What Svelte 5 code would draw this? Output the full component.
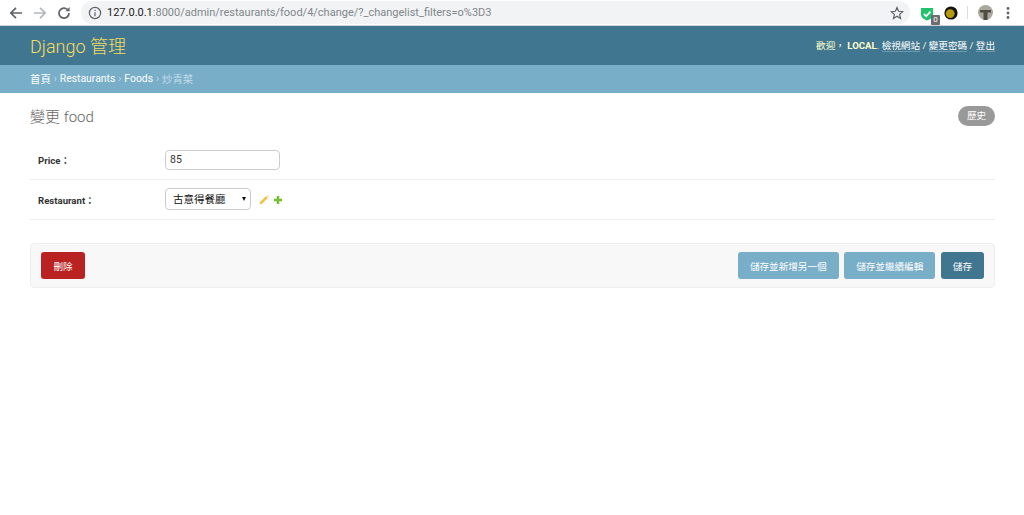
<script>
	let price = $state("85");
	let restaurant = $state("古意得餐廳");
</script>

<div class="browser-bar">
	<div class="nav-icons">
		<svg width="16" height="16" viewBox="0 0 16 16" fill="none" stroke="#5f6368" stroke-width="1.7"><path d="M14 8H3M8 2.8 2.8 8 8 13.2" /></svg>
		<svg width="16" height="16" viewBox="0 0 16 16" fill="none" stroke="#b5b8bb" stroke-width="1.7"><path d="M2 8h11M8 2.8 13.2 8 8 13.2" /></svg>
		<svg width="16" height="16" viewBox="0 0 16 16" fill="none" stroke="#5f6368" stroke-width="1.7"><path d="M13 8a5 5 0 1 1-1.5-3.5" /><path d="M13.6 2v4.2H9.4" fill="#5f6368" stroke="none" /></svg>
	</div>
	<div class="omnibox">
		<svg class="info" width="14" height="14" viewBox="0 0 14 14" fill="none" stroke="#5f6368" stroke-width="1.2"><circle cx="7" cy="7" r="5.6" /><path d="M7 6.2v4M7 3.8v1.3" /></svg>
		<span class="url"><span class="host">127.0.0.1</span>:8000/admin/restaurants/food/4/change/?_changelist_filters=o%3D3</span>
		<svg class="star" width="14" height="14" viewBox="0 0 14 14" fill="none" stroke="#5f6368" stroke-width="1.2"><path d="M7 1.6 8.6 5.3l4 .4-3 2.7.9 4L7 10.3l-3.5 2.1.9-4-3-2.7 4-.4z" /></svg>
	</div>
	<div class="extensions">
		<div class="ext-shield">
			<svg width="14" height="14" viewBox="0 0 14 14"><path d="M1 1h12v6.5c0 3-3 5-6 6-3-1-6-3-6-6z" fill="#1fc46c" /><path d="M3.8 6.8 6.2 9.2 10.4 4.6" fill="none" stroke="#fff" stroke-width="1.7" /></svg>
			<span class="ext-badge">0</span>
		</div>
		<svg width="14" height="14" viewBox="0 0 14 14"><circle cx="7" cy="7" r="6.6" fill="#16130a" /><circle cx="6.2" cy="7.6" r="4.4" fill="#b39a10" /></svg>
		<span class="bar-sep"></span>
		<svg width="15" height="15" viewBox="0 0 15 15"><circle cx="7.5" cy="7.5" r="7.5" fill="#a8a89c" /><path d="M2 5h11v2.5H9.5V15h-4V7.5H2z" fill="#4f4d42" /></svg>
		<svg class="dots" width="4" height="14" viewBox="0 0 4 14" fill="#5f6368"><circle cx="2" cy="2.5" r="1.4" /><circle cx="2" cy="7" r="1.4" /><circle cx="2" cy="11.5" r="1.4" /></svg>
	</div>
</div>

<header class="site-header">
	<h1 class="branding">Django 管理</h1>
	<div class="user-tools">
		歡迎， <strong>LOCAL</strong>.
		<a href="#site">檢視網站</a> /
		<a href="#password">變更密碼</a> /
		<a href="#logout">登出</a>
	</div>
</header>

<nav class="breadcrumbs">
	<a href="#home">首頁</a>
	<span class="sep">›</span>
	<a href="#app">Restaurants</a>
	<span class="sep">›</span>
	<a href="#model">Foods</a>
	<span class="sep">›</span>
	<span>炒青菜</span>
</nav>

<main class="content">
	<div class="title-row">
		<h2>變更 food</h2>
		<a class="history" href="#history">歷史</a>
	</div>

	<form onsubmit={(e) => e.preventDefault()}>
		<div class="form-row">
			<label for="price">Price：</label>
			<input id="price" type="text" bind:value={price} />
		</div>
		<div class="form-row">
			<label for="restaurant">Restaurant：</label>
			<div class="select-wrap">
				<select id="restaurant" bind:value={restaurant}>
					<option>古意得餐廳</option>
				</select>
			</div>
			<svg class="row-icon" width="10" height="10" viewBox="0 0 10 10" fill="#efc03a"><path d="M6.9 1.3 8.7 3.1 3 8.8 .6 9.4 1.2 7z" /><path d="M7.5.7 8.1.2 9.8 1.9 9.3 2.5z" /></svg>
			<svg class="row-icon" width="10" height="10" viewBox="0 0 10 10"><path d="M3.8 1h2.4v2.8H9v2.4H6.2V9H3.800V6.200H1V3.800h2.800z" fill="#70bf2b" /></svg>
		</div>

		<div class="submit-row">
			<button class="delete" type="button">刪除</button>
			<span class="spacer"></span>
			<button type="button">儲存並新增另一個</button>
			<button type="button">儲存並繼續編輯</button>
			<button class="default" type="submit">儲存</button>
		</div>
	</form>
</main>

<style>
	:global(body) {
		background: #fff;
		font-family: Roboto, "Noto Sans CJK TC", sans-serif;
		color: #333;
	}

	.browser-bar {
		height: 25px;
		display: flex;
		align-items: center;
		border-bottom: 1px solid #d0d2d4;
		background: #fff;
		padding-left: 8px;
	}

	.nav-icons {
		display: flex;
		gap: 8px;
		width: 73px;
	}

	.omnibox {
		width: 829px;
		height: 23px;
		display: flex;
		align-items: center;
		background: #f1f3f4;
		border-radius: 12px;
		padding: 0 6px 0 7px;
		box-sizing: border-box;
	}

	.info {
		margin-right: 5px;
	}

	.url {
		flex: 1;
		font-family: Roboto, sans-serif;
		font-size: 11px;
		color: #80868b;
		white-space: nowrap;
	}

	.host {
		color: #202124;
	}

	.extensions {
		display: flex;
		align-items: center;
		margin-left: 10px;
		gap: 9.5px;
	}

	.ext-shield {
		position: relative;
		width: 14px;
		height: 14px;
	}

	.ext-badge {
		position: absolute;
		right: -6px;
		bottom: -5px;
		width: 9px;
		height: 10px;
		background: #6b6d72;
		color: #fff;
		font-size: 8px;
		line-height: 10px;
		text-align: center;
		border-radius: 1px;
	}

	.bar-sep {
		width: 1px;
		height: 13px;
		background: #dadce0;
	}

	.dots {
		margin-left: 4px;
	}

	.site-header {
		height: 39px;
		background: #417690;
		color: #ffc;
		display: flex;
		align-items: center;
		justify-content: space-between;
		padding: 0 29px 2px 30px;
		box-sizing: border-box;
	}

	.branding {
		margin: 0;
		font-size: 18px;
		font-weight: 300;
		color: #f5dd5d;
	}

	.user-tools {
		font-size: 9.6px;
		white-space: nowrap;
	}

	.user-tools strong {
		font-weight: 700;
	}

	.user-tools a {
		color: #fff;
		text-decoration: none;
		border-bottom: 1px solid rgba(255, 255, 255, 0.25);
	}

	.breadcrumbs {
		height: 28px;
		box-sizing: border-box;
		padding: 0 30px 2px;
		background: #79aec8;
		color: #c4dce8;
		display: flex;
		align-items: center;
		gap: 3px;
		font-size: 10.4px;
	}

	.breadcrumbs a {
		color: #fff;
		text-decoration: none;
	}

	.sep {
		font-size: 10px;
	}

	.content {
		padding: 13px 29px 0 30px;
	}

	.title-row {
		display: flex;
		justify-content: space-between;
		align-items: flex-start;
		height: 34px;
	}

	h2 {
		margin: 1px 0 0;
		font-size: 15px;
		line-height: 21px;
		font-weight: 300;
		color: #666;
	}

	.history {
		background: #999;
		color: #fff;
		font-size: 9.6px;
		line-height: 20px;
		height: 20px;
		width: 37px;
		text-align: center;
		border-radius: 10px;
		text-decoration: none;
	}

	.form-row {
		display: flex;
		align-items: center;
		height: 39px;
		border-bottom: 1px solid #eee;
		padding-left: 8px;
		font-size: 9.6px;
	}

	label {
		width: 127px;
		font-weight: 700;
		color: #333;
	}

	input {
		width: 115px;
		height: 20px;
		box-sizing: border-box;
		border: 1px solid #ccc;
		border-radius: 4px;
		padding: 2px 4px;
		font-family: Roboto, sans-serif;
		font-size: 10.5px;
		color: #333;
		outline: none;
	}

	.select-wrap {
		position: relative;
		margin: -2px 8px 0 0;
		height: 22px;
	}

	.select-wrap::after {
		content: "";
		position: absolute;
		top: 9px;
		right: 5px;
		border-top: 4px solid #111;
		border-left: 2.5px solid transparent;
		border-right: 2.5px solid transparent;
		pointer-events: none;
	}

	select {
		appearance: none;
		display: block;
		width: 86px;
		height: 22px;
		border: 1px solid #ccc;
		border-radius: 4px;
		background: #fff;
		color: #111;
		font-family: "Noto Sans CJK TC", sans-serif;
		font-size: 10.5px;
		padding: 0 7px;
	}

	.row-icon {
		margin-right: 4px;
	}

	.submit-row {
		display: flex;
		align-items: center;
		gap: 5.5px;
		height: 45px;
		box-sizing: border-box;
		margin-top: 23px;
		padding: 0 10px;
		background: #f8f8f8;
		border: 1px solid #eee;
		border-radius: 4px;
	}

	.spacer {
		flex: 1;
	}

	button {
		height: 27px;
		padding: 0 12px;
		border: none;
		border-radius: 3px;
		background: #79aec8;
		color: #fff;
		font-family: Roboto, "Noto Sans CJK TC", sans-serif;
		font-size: 9.6px;
	}

	.default {
		background: #417690;
	}

	.delete {
		background: #ba2121;
		width: 44px;
		padding: 0;
	}
</style>
